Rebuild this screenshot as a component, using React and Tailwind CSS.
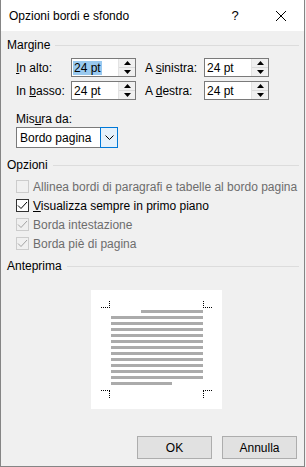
import React from 'react';

const font = { fontFamily: '"Liberation Sans", Arial, sans-serif' };

const Spinner = () => (
  <div className="flex flex-col w-[17px] h-full border-l border-[#e3e3e3]">
    <div className="flex-1 flex items-center justify-center bg-[#f0f0f0] border-b border-[#dadada]">
      <svg width="7" height="4" viewBox="0 0 7 4"><path d="M0 4 L3.5 0 L7 4 Z" fill="#000" /></svg>
    </div>
    <div className="flex-1 flex items-center justify-center bg-[#f0f0f0]">
      <svg width="7" height="4" viewBox="0 0 7 4"><path d="M0 0 L3.5 4 L7 0 Z" fill="#000" /></svg>
    </div>
  </div>
);

const SpinBox = ({ selected }) => (
  <div className="flex w-[65px] h-[19px] bg-white border border-[#7a7a7a]">
    <div className="flex-1 flex items-center pl-[1px]">
      <span className={selected ? 'bg-[#99c9ef] px-[1px] leading-[14px]' : 'px-[1px] leading-[14px]'}>24 pt</span>
    </div>
    <Spinner />
  </div>
);

const GroupHeader = ({ title }) => (
  <div className="flex items-center h-4">
    <span className="whitespace-nowrap">{title}</span>
    <div className="flex-1 h-px bg-[#dcdcdc] ml-[5px]" />
  </div>
);

const Check = ({ checked, disabled, children }) => (
  <div className="flex items-center h-[19px] pl-[9px]">
    <div
      className={
        'w-[13px] h-[13px] shrink-0 border flex items-center justify-center ' +
        (disabled ? 'border-[#cccccc] bg-[#f0f0f0]' : 'border-[#333333] bg-white')
      }
    >
      {checked && (
        <svg width="11" height="11" viewBox="0 0 11 11">
          <path d="M1 5.5 L4 8.5 L10 2" fill="none" stroke={disabled ? '#a3a3a3' : '#000'} strokeWidth="1" />
        </svg>
      )}
    </div>
    <span className={'ml-[4px] whitespace-nowrap ' + (disabled ? 'text-[#6d6d6d]' : 'text-black')}>{children}</span>
  </div>
);

const Preview = () => {
  const lines = [];
  for (let k = 0; k < 13; k++) {
    const x = k === 0 ? 50 : 20;
    const w = k === 12 ? 61 : 111 - x + 1;
    lines.push(<rect key={k} x={x} y={20 + k * 6} width={w} height="3" fill="#ababab" />);
  }
  const dot = { stroke: '#000', strokeWidth: 1, strokeDasharray: '1 1', shapeRendering: 'crispEdges' };
  return (
    <svg width="131" height="119" viewBox="0 0 131 119" className="block">
      <rect x="0" y="0" width="131" height="119" fill="#fff" />
      {lines}
      <line x1="10" y1="17.5" x2="19" y2="17.5" style={dot} />
      <line x1="18.5" y1="11" x2="18.5" y2="18" style={dot} />
      <line x1="112" y1="17.5" x2="122" y2="17.5" style={dot} />
      <line x1="112.5" y1="11" x2="112.5" y2="18" style={dot} />
      <line x1="10" y1="100.5" x2="19" y2="100.5" style={dot} />
      <line x1="18.5" y1="101" x2="18.5" y2="108" style={dot} />
      <line x1="112" y1="100.5" x2="122" y2="100.5" style={dot} />
      <line x1="112.5" y1="101" x2="112.5" y2="108" style={dot} />
    </svg>
  );
};

export default function App() {
  return (
    <div className="w-[306px] h-[467px] bg-[#f0f0f0] text-[12px] text-black whitespace-nowrap" style={font}>
      <div className="w-[305px] h-[467px] flex flex-col border-l border-r border-b border-[#858585]">
        {/* Title bar */}
        <div className="h-[31px] bg-white flex items-center shrink-0">
          <span className="ml-[8px] flex-1">Opzioni bordi e sfondo</span>
          <span className="w-[46px] text-center text-[13px]">?</span>
          <div className="w-[46px] flex items-center justify-center">
            <svg width="12" height="12" viewBox="0 0 12 12">
              <path d="M1 1 L11 11 M11 1 L1 11" stroke="#000" strokeWidth="1" />
            </svg>
          </div>
        </div>

        {/* Body */}
        <div className="flex-1 bg-[#f0f0f0] pl-[6px] pr-[5px] flex flex-col">
          <div className="mt-[6px]">
            <GroupHeader title="Margine" />
          </div>

          <div className="mt-[5px] flex items-center pl-[9px]">
            <span className="w-[55px]"><u>I</u>n alto:</span>
            <SpinBox selected />
            <span className="ml-[9px] w-[59px]">A <u>s</u>inistra:</span>
            <SpinBox />
          </div>
          <div className="mt-[4px] flex items-center pl-[9px]">
            <span className="w-[55px]">In <u>b</u>asso:</span>
            <SpinBox />
            <span className="ml-[9px] w-[59px]">A <u>d</u>estra:</span>
            <SpinBox />
          </div>

          <div className="mt-[11px] pl-[9px] leading-4">Mis<u>u</u>ra da:</div>
          <div className="pl-[9px]">
            <div className="flex w-[102px] h-[21px] bg-white border border-[#7a7a7a]">
              <div className="flex-1 flex items-center pl-[3px]">Bordo pagina</div>
              <div className="w-[18px] -my-px -mr-px bg-[#e5f1fb] border border-[#0078d7] flex items-center justify-center">
                <svg width="9" height="5" viewBox="0 0 9 5">
                  <path d="M0.5 0.5 L4.5 4.5 L8.5 0.5" fill="none" stroke="#000" strokeWidth="1" />
                </svg>
              </div>
            </div>
          </div>

          <div className="mt-[9px]">
            <GroupHeader title="Opzioni" />
          </div>
          <div className="mt-[4px] flex flex-col">
            <Check disabled>Allinea bordi di paragrafi e tabelle al bordo pagina</Check>
            <Check checked><u>V</u>isualizza sempre in primo piano</Check>
            <Check checked disabled>Borda intestazione</Check>
            <Check checked disabled>Borda piè di pagina</Check>
          </div>

          <div className="mt-[5px]">
            <GroupHeader title="Anteprima" />
          </div>
          <div className="mt-[16px] ml-[84px]">
            <Preview />
          </div>

          <div className="mt-[27px] flex justify-end gap-[10px] mr-[2px]">
            <button className="w-[75px] h-[23px] bg-[#e1e1e1] border border-[#adadad]">OK</button>
            <button className="w-[75px] h-[23px] bg-[#e1e1e1] border border-[#adadad]">Annulla</button>
          </div>
        </div>
      </div>
    </div>
  );
}
